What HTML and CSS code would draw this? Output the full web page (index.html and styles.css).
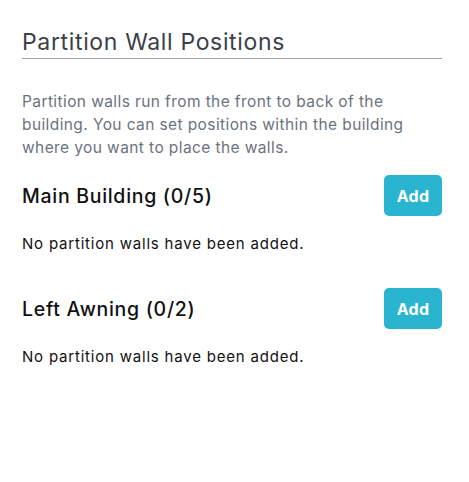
FILE: index.html
```html
<!DOCTYPE html>
<html>
<head>
<meta charset="utf-8">
<link rel="stylesheet" href="styles.css">
</head>
<body>
<div class="page">
  <h1 class="title">Partition Wall Positions</h1>
  <p class="intro">Partition walls run from the front to back of the building. You can set positions within the building where you want to place the walls.</p>
  <section class="group">
    <div class="group-head">
      <h2 class="group-title">Main Building (0/5)</h2>
      <button class="add-btn">Add</button>
    </div>
    <p class="empty">No partition walls have been added.</p>
  </section>
  <section class="group">
    <div class="group-head">
      <h2 class="group-title">Left Awning (0/2)</h2>
      <button class="add-btn">Add</button>
    </div>
    <p class="empty">No partition walls have been added.</p>
  </section>
</div>
</body>
</html>
```
FILE: styles.css
```css
html, body {
  margin: 0;
  padding: 0;
  background: #ffffff;
}
body {
  font-family: Inter, "Open Sans", sans-serif;
}
.page {
  width: 420px;
  padding: 26px 27px 0 22px;
}
.title {
  margin: 0;
  font-size: 23px;
  font-weight: 400;
  letter-spacing: 0.65px;
  color: #3b3f4a;
  line-height: 32px;
  border-bottom: 1px solid #9ca3af;
}
.intro {
  margin: 31px 0 0;
  font-size: 15.5px;
  letter-spacing: 0.4px;
  line-height: 23px;
  color: #6b7280;
}
.group {
  margin-top: 16px;
}
.group + .group {
  margin-top: 34px;
}
.group-head {
  display: flex;
  justify-content: space-between;
  align-items: center;
}
.group-title {
  margin: 0;
  font-size: 19.5px;
  font-weight: 500;
  letter-spacing: 0.7px;
  color: #111111;
}
.add-btn {
  width: 58px;
  height: 41px;
  border: none;
  border-radius: 5px;
  background: #29b5d0;
  color: #ffffff;
  font-family: inherit;
  font-size: 16px;
  font-weight: 700;
  letter-spacing: 0.3px;
  padding: 0;
}
.empty {
  margin: 18px 0 0;
  font-size: 15px;
  letter-spacing: 0.8px;
  line-height: 20px;
  color: #111111;
}
```
